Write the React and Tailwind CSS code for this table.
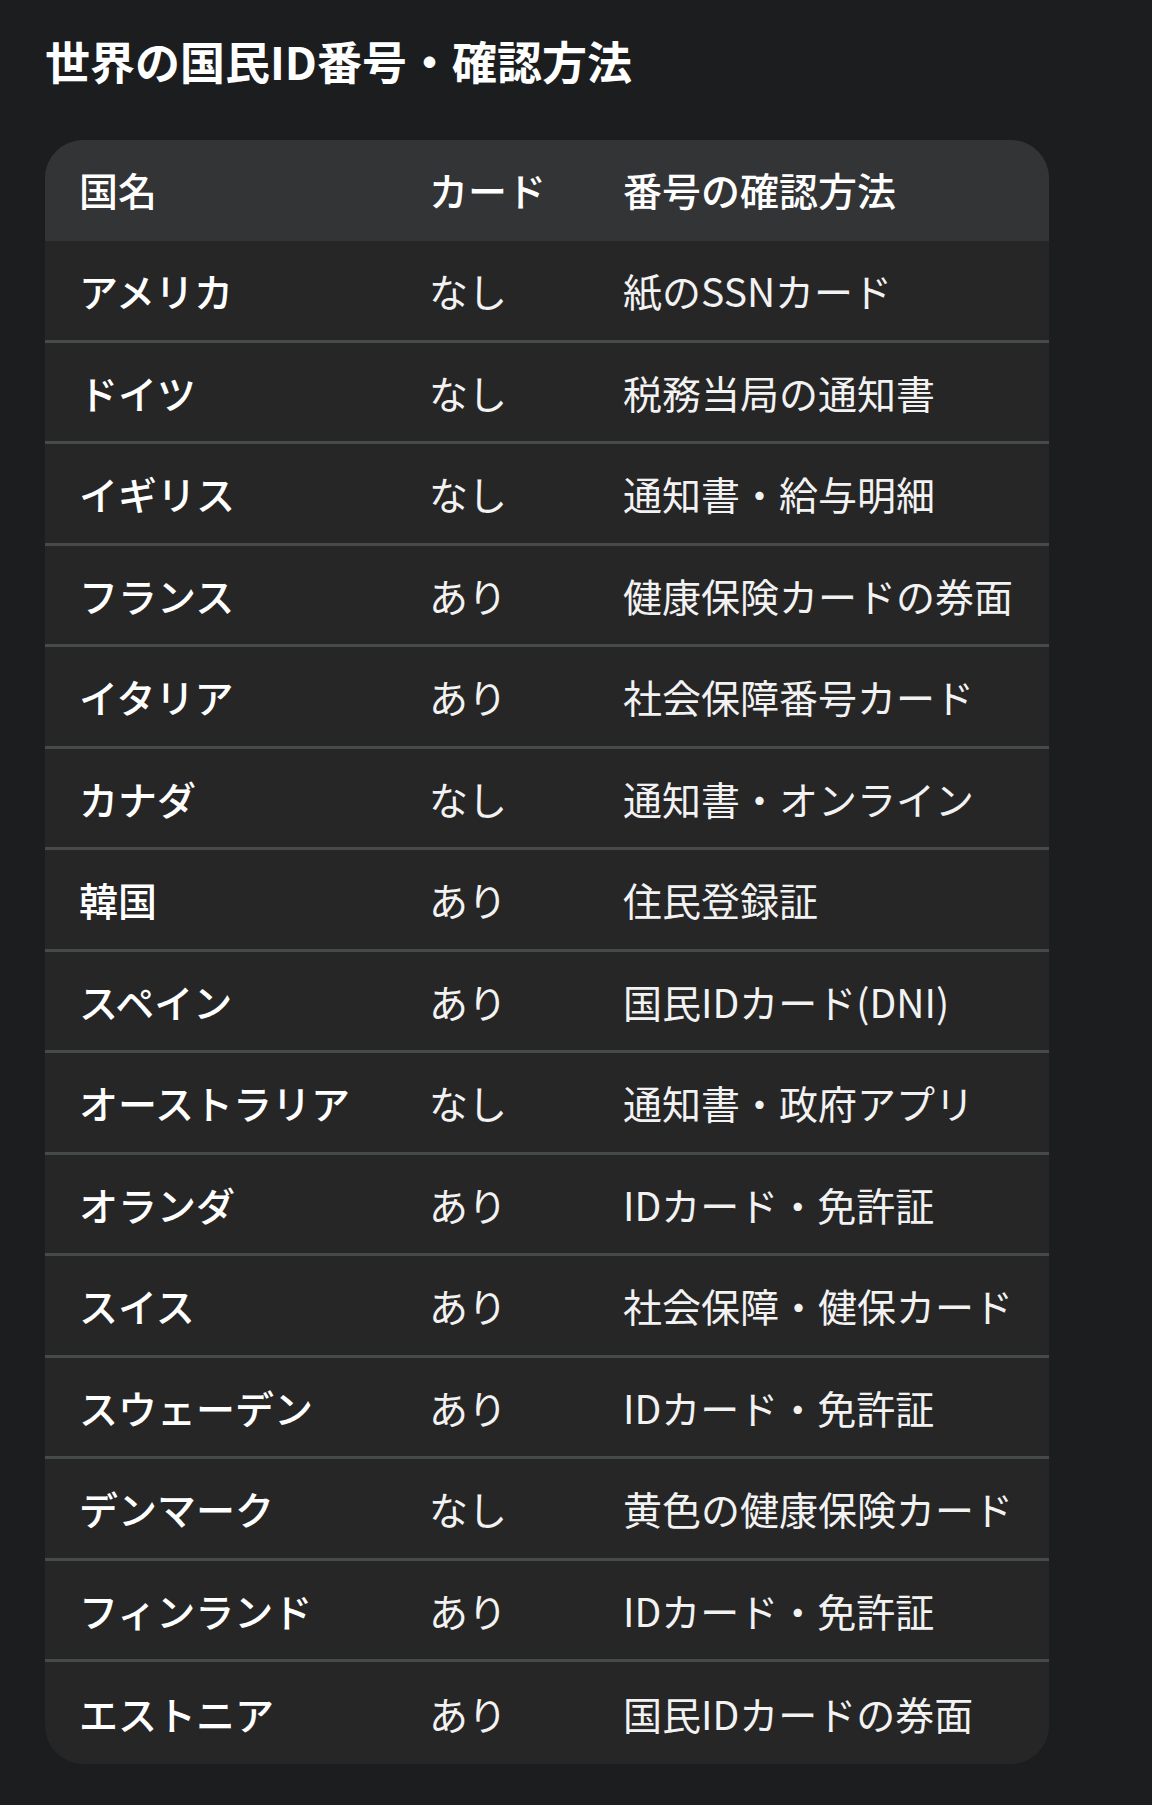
import React from 'react';

const rows = [
  ['アメリカ', 'なし', '紙のSSNカード'],
  ['ドイツ', 'なし', '税務当局の通知書'],
  ['イギリス', 'なし', '通知書・給与明細'],
  ['フランス', 'あり', '健康保険カードの券面'],
  ['イタリア', 'あり', '社会保障番号カード'],
  ['カナダ', 'なし', '通知書・オンライン'],
  ['韓国', 'あり', '住民登録証'],
  ['スペイン', 'あり', '国民IDカード(DNI)'],
  ['オーストラリア', 'なし', '通知書・政府アプリ'],
  ['オランダ', 'あり', 'IDカード・免許証'],
  ['スイス', 'あり', '社会保障・健保カード'],
  ['スウェーデン', 'あり', 'IDカード・免許証'],
  ['デンマーク', 'なし', '黄色の健康保険カード'],
  ['フィンランド', 'あり', 'IDカード・免許証'],
  ['エストニア', 'あり', '国民IDカードの券面'],
];

const App = () => {
  return (
    <div className="min-h-screen bg-[#1c1d1f] px-[45px] pt-[33px] pb-[42px] font-['Noto_Sans_CJK_JP','Noto_Sans',sans-serif] text-white">
      <h1 className="text-[45px] leading-[56px] font-bold">世界の国民ID番号・確認方法</h1>

      <div className="mt-[51px] w-[1004px] overflow-hidden rounded-[38px] bg-[#262626]">
        <div className="grid h-[101px] grid-cols-[350px_194px_1fr] items-center bg-[#333436] pl-[34px] pb-[2px] text-[39px] font-medium">
          <div>国名</div>
          <div>カード</div>
          <div>番号の確認方法</div>
        </div>
        {rows.map(([name, card, how], i) => (
          <div
            key={i}
            className="grid h-[101.5px] grid-cols-[350px_194px_1fr] items-center border-b-[3px] border-[#464b49] pl-[34px] text-[39px] last:border-b-0"
          >
            <div className="font-medium text-white">{name}</div>
            <div className="text-[#f2f2f2]">{card}</div>
            <div className="whitespace-nowrap text-[#f2f2f2]">{how}</div>
          </div>
        ))}
      </div>
    </div>
  );
};

export default App;
